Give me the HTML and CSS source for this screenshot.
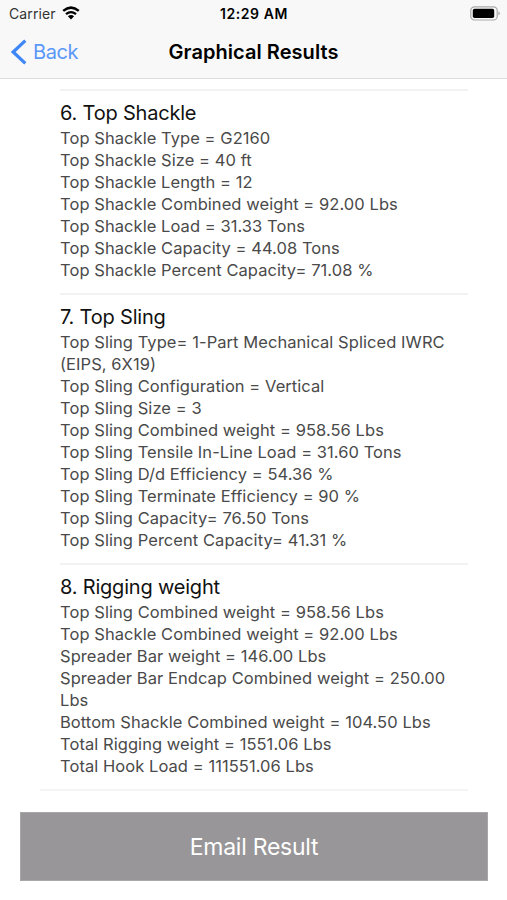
FILE: index.html
```
<!DOCTYPE html>
<html lang="en">
<head>
  <meta charset="UTF-8" />
  <meta name="viewport" content="width=device-width, initial-scale=1.0" />
  <title>Graphical Results</title>

  <link rel="stylesheet" href="styles.css">
</head>

<body>

<!-- Header -->
<header class="header">
  <div class="status-bar">
    <div class="carrier">
      <span>Carrier</span>
      <svg class="wifi" viewBox="0 0 18 14" width="18" height="14">
        <path d="M1.2 4.9 Q9 -1.7 16.8 4.9" fill="none" stroke="#000" stroke-width="2.5" />
        <path d="M4 8.2 Q9 4 14 8.2" fill="none" stroke="#000" stroke-width="2.3" />
        <path d="M5.9 10.3 Q9 7.9 12.1 10.3 L9 13.6 Z" fill="#000" />
      </svg>
    </div>
    <div class="time">12:29 AM</div>
    <div class="battery">
      <svg viewBox="0 0 31 15" width="31" height="15">
        <rect x="0.8" y="0.8" width="26.4" height="13.2" rx="3.6" fill="none" stroke="#a9a9a9" stroke-width="1.2" />
        <rect x="2.8" y="2.8" width="21.4" height="9.2" rx="1.8" fill="#000" />
        <path d="M28.4 5.2 Q31.4 7.4 28.4 9.6 Z" fill="#a9a9a9" />
      </svg>
    </div>
  </div>

  <nav class="navbar">
    <a class="back" href="#">
      <svg viewBox="0 0 16 26" width="16" height="26">
        <path d="M14.3 1.6 L2.2 13 L14.3 24.4" fill="none" stroke="#3f86f7" stroke-width="3.2" />
      </svg>
      <span>Back</span>
    </a>
    <h1>Graphical Results</h1>
  </nav>
</header>

<!-- Results -->
<main class="results">
  <section class="result">
    <h2>6. Top Shackle</h2>
    <p>Top Shackle Type = G2160</p>
    <p>Top Shackle Size = 40 ft</p>
    <p>Top Shackle Length = 12</p>
    <p>Top Shackle Combined weight = 92.00 Lbs</p>
    <p>Top Shackle Load = 31.33 Tons</p>
    <p>Top Shackle Capacity = 44.08 Tons</p>
    <p>Top Shackle Percent Capacity= 71.08 %</p>
  </section>

  <section class="result">
    <h2>7. Top Sling</h2>
    <p>Top Sling Type= 1-Part Mechanical Spliced IWRC<br>(EIPS, 6X19)</p>
    <p>Top Sling Configuration = Vertical</p>
    <p>Top Sling Size = 3</p>
    <p>Top Sling Combined weight = 958.56 Lbs</p>
    <p>Top Sling Tensile In-Line Load = 31.60 Tons</p>
    <p>Top Sling D/d Efficiency = 54.36 %</p>
    <p>Top Sling Terminate Efficiency = 90 %</p>
    <p>Top Sling Capacity= 76.50 Tons</p>
    <p>Top Sling Percent Capacity= 41.31 %</p>
  </section>

  <section class="result">
    <h2>8. Rigging weight</h2>
    <p>Top Sling Combined weight = 958.56 Lbs</p>
    <p>Top Shackle Combined weight = 92.00 Lbs</p>
    <p>Spreader Bar weight = 146.00 Lbs</p>
    <p>Spreader Bar Endcap Combined weight = 250.00<br>Lbs</p>
    <p>Bottom Shackle Combined weight = 104.50 Lbs</p>
    <p>Total Rigging weight = 1551.06 Lbs</p>
    <p>Total Hook Load = 111551.06 Lbs</p>
  </section>
</main>

<footer class="footer">
  <button class="email-btn">Email Result</button>
</footer>

</body>
</html>
```

FILE: styles.css
```
* { margin: 0; padding: 0; box-sizing: border-box; }

body {
  font-family: Inter, "Liberation Sans", sans-serif;
  background: #fff;
  height: 900px;
  overflow: hidden;
}

.header {
  height: 79px;
  background: #f8f8f8;
  border-bottom: 1px solid #dcdcdc;
}

.status-bar {
  display: grid;
  grid-template-columns: 1fr auto 1fr;
  align-items: center;
  height: 27px;
  padding: 0 6px 0 9px;
  font-size: 14px;
}

.carrier {
  display: flex;
  align-items: center;
  gap: 6px;
  color: #333;
  letter-spacing: 0.1px;
}

.wifi {
  margin-top: -2px;
}

.time {
  margin-right: 2px;
  font-weight: 600;
  letter-spacing: 0.55px;
}

.battery {
  display: flex;
  justify-content: flex-end;
}

.navbar {
  display: grid;
  grid-template-columns: 1fr auto 1fr;
  align-items: center;
  height: 49px;
  padding: 0 11px;
}

.back {
  display: flex;
  align-items: center;
  gap: 6px;
  color: #5b97f8;
  font-size: 20px;
  letter-spacing: -0.4px;
  text-decoration: none;
}

h1 {
  font-size: 20px;
  font-weight: 600;
  letter-spacing: 0.05px;
}

.results {
  padding: 10px 39px 0 40px;
  border-bottom: 2px solid #fff;
}

.result {
  margin-left: 20px;
  padding: 8px 0 12px;
  border-top: 2px solid #f2f2f2;
}

.results::after {
  content: "";
  display: block;
  height: 2px;
  background: #f4f4f4;
}

h2 {
  font-size: 20px;
  font-weight: 400;
  line-height: 28px;
  letter-spacing: -0.2px;
  color: #111;
}

.result p {
  font-size: 16.5px;
  line-height: 22px;
  letter-spacing: 0.06px;
  color: #4a4a4a;
  white-space: nowrap;
}

.footer {
  padding: 19px 19px 0 20px;
}

.email-btn {
  display: block;
  width: 100%;
  height: 69px;
  border: 1px solid #a9a7a9;
  background: #989698;
  color: #fff;
  font-family: inherit;
  font-size: 23px;
  letter-spacing: -0.25px;
}
```
